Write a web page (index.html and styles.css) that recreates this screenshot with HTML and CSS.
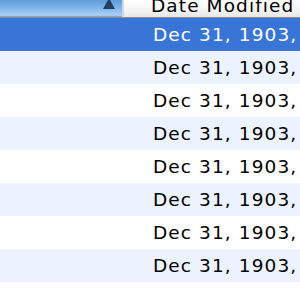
FILE: index.html
```html
<!DOCTYPE html>
<html lang="en">
<head>
  <meta charset="UTF-8" />
  <title>Finder list</title>
  <link rel="stylesheet" href="styles.css">
</head>
<body>

  <div class="list">
    <div class="header">
      <div class="col col-name sorted">
        <svg class="sort-arrow" width="14" height="12" viewBox="0 0 14 12">
          <polygon points="1,10 13,10 7,-1" fill="#233f63"/>
        </svg>
      </div>
      <div class="col col-date">Date Modified</div>
    </div>

    <div class="row selected"><div class="cell name"></div><div class="cell date">Dec 31, 1903,</div></div>
    <div class="row"><div class="cell name"></div><div class="cell date">Dec 31, 1903,</div></div>
    <div class="row"><div class="cell name"></div><div class="cell date">Dec 31, 1903,</div></div>
    <div class="row"><div class="cell name"></div><div class="cell date">Dec 31, 1903,</div></div>
    <div class="row"><div class="cell name"></div><div class="cell date">Dec 31, 1903,</div></div>
    <div class="row"><div class="cell name"></div><div class="cell date">Dec 31, 1903,</div></div>
    <div class="row"><div class="cell name"></div><div class="cell date">Dec 31, 1903,</div></div>
    <div class="row"><div class="cell name"></div><div class="cell date">Dec 31, 1903,</div></div>
    <div class="row"><div class="cell name"></div><div class="cell date"></div></div>
  </div>

</body>
</html>
```

FILE: styles.css
```css
body {
  margin: 0;
  overflow: hidden;
  font-family: "DejaVu Sans", Verdana, sans-serif;
  font-size: 18.5px;
  letter-spacing: 1.1px;
  color: #000;
  background-color: #fff;
}

.list {
  width: 300px;
  overflow: hidden;
}

.header {
  display: flex;
  height: 17px;
  border-bottom: 1px solid #8c8c8c;
}

.col {
  line-height: 12px;
  padding-bottom: 5px;
  white-space: nowrap;
  overflow: hidden;
}

.col-name {
  width: 123px;
  flex: none;
  display: flex;
  justify-content: flex-end;
  padding-right: 6px;
  box-sizing: border-box;
}

.sorted {
  background: linear-gradient(#5f9ddc, #7fb4ea 45%, #a9d1f7 90%, #6f93c4);
  border-right: 1px solid #c3dcf4;
}

.sort-arrow {
  display: block;
  margin-top: -1px;
}

.col-date {
  flex: 1;
  padding-left: 27px;
  background: linear-gradient(#ffffff, #f4f4f4 60%, #e6e6e6);
  border-left: 1px solid #d8d8d8;
}

.row {
  display: flex;
  height: 33px;
  line-height: 33px;
  white-space: nowrap;
}

.row:nth-child(odd) {
  background-color: #edf3fe;
}

.row.selected {
  background-color: #3875d7;
  color: #fff;
}

.cell.name {
  width: 125px;
  flex: none;
}

.cell.date {
  flex: 1;
  padding-left: 28px;
  overflow: hidden;
}
```
